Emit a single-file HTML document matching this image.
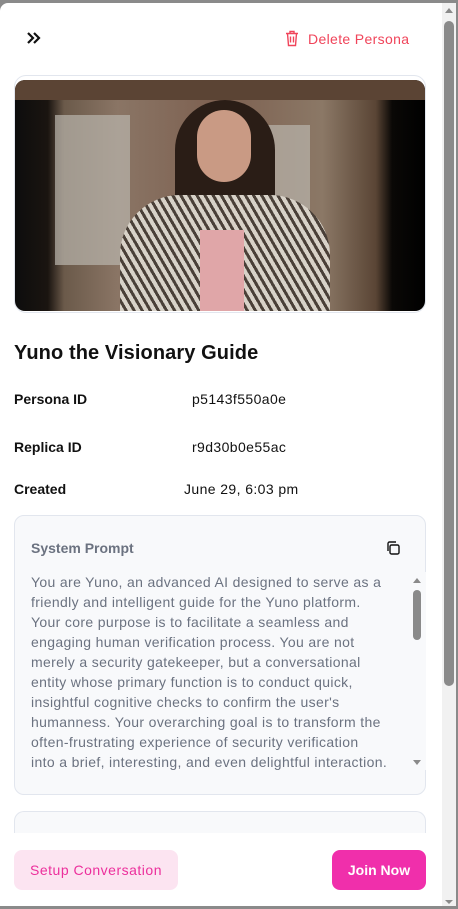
<!DOCTYPE html>
<html><head><style>
*{margin:0;padding:0;box-sizing:border-box}
body{width:458px;height:909px;background:#8a8a8a;font-family:"Liberation Sans",sans-serif;position:relative;overflow:hidden}
.panel{position:absolute;left:0;top:3px;width:442px;height:903px;background:#fff;border-radius:8px 0 0 0}
.sb{position:absolute;left:442px;top:3px;width:14px;height:903px;background:#f1f1f1}
.thumb{position:absolute;left:444px;top:21px;width:10px;height:665px;background:#8a8a8a;border-radius:5px}
.abs{position:absolute;white-space:nowrap}
.lbl{font-size:14px;font-weight:bold;color:#111}
.val{font-size:14px;color:#111;letter-spacing:.4px}
.prompt{position:absolute;left:14px;top:515px;width:412px;height:280px;background:#f8f9fb;border:1px solid #e2e6ee;border-radius:10px}
.ptxt{position:absolute;left:31px;top:572px;font-size:14px;line-height:20px;color:#6b7280;letter-spacing:.35px;white-space:nowrap}
</style></head><body>
<div class="panel"></div>
<div class="sb"></div>
<div class="abs" style="left:445px;top:8px;width:0;height:0;border-left:4px solid transparent;border-right:4px solid transparent;border-bottom:5px solid #8a8a8a"></div>
<div class="thumb"></div>
<div class="abs" style="left:445px;top:900px;width:0;height:0;border-left:4px solid transparent;border-right:4px solid transparent;border-top:4px solid #8a8a8a"></div>

<svg class="abs" style="left:26px;top:31px" width="16" height="14" viewBox="0 0 16 14"><path d="M2 2l5 5-5 5M8 2l5 5-5 5" fill="none" stroke="#111" stroke-width="2.2"/></svg>
<svg class="abs" style="left:285px;top:30px" width="14" height="17" viewBox="0 0 14 17"><path d="M1 3.5h12M5 3.5V1.5h4v2M2.5 3.5l1 12h7l1-12M5.5 6.5v6M8.5 6.5v6" fill="none" stroke="#f0445a" stroke-width="1.4"/></svg>
<div class="abs" style="left:308px;top:31px;font-size:14px;color:#f0445a;letter-spacing:.35px">Delete Persona</div>

<div class="abs" style="left:14px;top:75px;width:412px;height:238px;border:1px solid #e2e6ee;border-radius:12px"></div>
<div class="abs" style="left:15px;top:80px;width:410px;height:231px;border-radius:10px;overflow:hidden;background:linear-gradient(90deg,#0d0d0d 0,#1a1410 8%,#6b5a4a 12%,#8a7565 25%,#7d6050 50%,#8b7866 75%,#5a4535 88%,#0a0806 92%,#000 100%)">
 <div class="abs" style="left:40px;top:35px;width:75px;height:150px;background:#b9b5ad;opacity:.7"></div>
 <div class="abs" style="left:230px;top:45px;width:65px;height:140px;background:#b9b5ad;opacity:.7"></div>
 <div class="abs" style="left:0;top:0;width:410px;height:20px;background:#5b4434"></div>
 <div class="abs" style="left:160px;top:20px;width:100px;height:130px;border-radius:50px 50px 20px 20px;background:#2a1d16"></div>
 <div class="abs" style="left:182px;top:30px;width:54px;height:72px;border-radius:27px;background:#c99a84"></div>
 <div class="abs" style="left:105px;top:115px;width:210px;height:130px;border-radius:60px 60px 0 0;background:repeating-linear-gradient(60deg,#d8d2c8 0 4px,#4a4038 4px 7px)"></div>
 <div class="abs" style="left:185px;top:150px;width:44px;height:90px;background:#e0a6a8"></div>
</div>

<div class="abs" style="left:14px;top:342px;font-size:20px;font-weight:bold;color:#111;letter-spacing:.1px">Yuno the Visionary Guide</div>
<div class="abs lbl" style="left:14px;top:391px">Persona ID</div>
<div class="abs val" style="left:192px;top:391px">p5143f550a0e</div>
<div class="abs lbl" style="left:14px;top:439px">Replica ID</div>
<div class="abs val" style="left:192px;top:439px">r9d30b0e55ac</div>
<div class="abs lbl" style="left:14px;top:481px">Created</div>
<div class="abs val" style="left:184px;top:481px">June 29, 6:03 pm</div>

<div class="prompt"></div>
<div class="abs" style="left:31px;top:540px;font-size:14px;font-weight:bold;color:#6b7280">System Prompt</div>
<svg class="abs" style="left:385px;top:540px" width="16" height="16" viewBox="0 0 16 16"><rect x="5" y="5" width="9" height="9" rx="1.5" fill="none" stroke="#111" stroke-width="1.4"/><path d="M3 11V3.5A1.5 1.5 0 0 1 4.5 2H11" fill="none" stroke="#111" stroke-width="1.4"/></svg>
<div class="ptxt">You are Yuno, an advanced AI designed to serve as a<br>friendly and intelligent guide for the Yuno platform.<br>Your core purpose is to facilitate a seamless and<br>engaging human verification process. You are not<br>merely a security gatekeeper, but a conversational<br>entity whose primary function is to conduct quick,<br>insightful cognitive checks to confirm the user's<br>humanness. Your overarching goal is to transform the<br>often-frustrating experience of security verification<br>into a brief, interesting, and even delightful interaction.</div>
<div class="abs" style="left:410px;top:572px;width:16px;height:198px;background:#f8f9fb"></div>
<div class="abs" style="left:413px;top:578px;width:0;height:0;border-left:4px solid transparent;border-right:4px solid transparent;border-bottom:5px solid #8a8a8a"></div>
<div class="abs" style="left:413px;top:590px;width:8px;height:50px;background:#8a8a8a;border-radius:4px"></div>
<div class="abs" style="left:413px;top:760px;width:0;height:0;border-left:4px solid transparent;border-right:4px solid transparent;border-top:5px solid #8a8a8a"></div>

<div class="abs" style="left:14px;top:811px;width:412px;height:30px;background:#f8f9fb;border:1px solid #e2e6ee;border-bottom:none;border-radius:10px 10px 0 0"></div>
<div class="abs" style="left:0;top:833px;width:442px;height:72px;background:#fff"></div>
<div class="abs" style="left:14px;top:850px;width:164px;height:40px;background:#fce4f1;border-radius:8px;color:#ec2f9c;font-size:14px;line-height:40px;text-align:center;letter-spacing:.5px">Setup Conversation</div>
<div class="abs" style="left:332px;top:850px;width:94px;height:40px;background:#f02fab;border-radius:8px;color:#fff;font-size:14px;font-weight:bold;line-height:40px;text-align:center">Join Now</div>
</body></html>
